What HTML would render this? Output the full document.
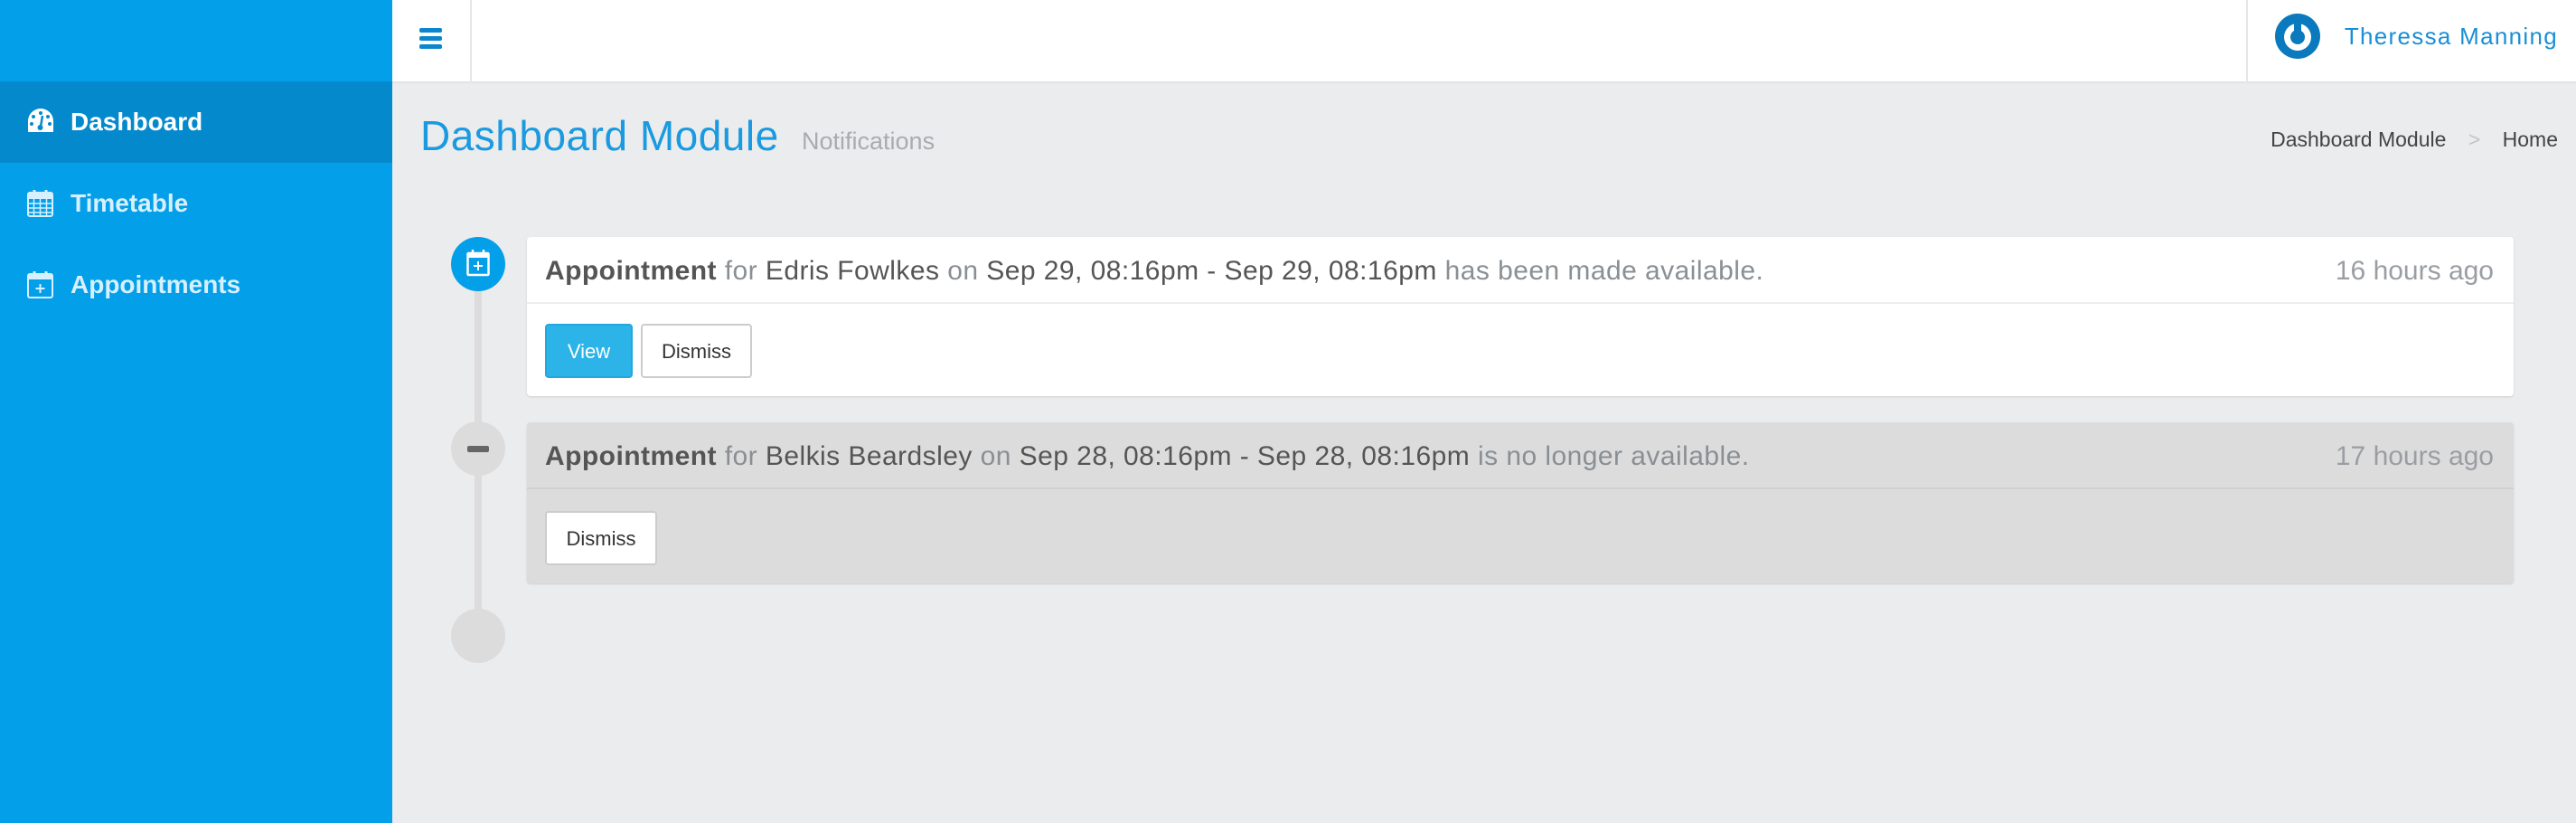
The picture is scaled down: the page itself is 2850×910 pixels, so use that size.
<!DOCTYPE html>
<html><head><meta charset="utf-8"><style>
*{margin:0;padding:0;box-sizing:border-box}
body{width:2850px;height:910px;background:#ebecee;font-family:"Liberation Sans",sans-serif;position:relative;overflow:hidden}
.abs{position:absolute}
#side{left:0;top:0;width:434px;height:910px;background:#039fe9}
.nav{left:0;width:434px;height:90px;color:#d6f0ff;font-weight:bold;font-size:28px;line-height:90px;padding-left:78px}
.nav svg{position:absolute;left:30px;top:29px}
#hdr{left:434px;top:0;width:2416px;height:92px;background:#fff;border-bottom:2px solid #e2e3e5}
.card{left:583px;width:2198px;border-radius:4px;box-shadow:0 1px 2px rgba(0,0,0,.12)}
.ch{height:74px;line-height:76px;padding-left:20px;font-size:30px;letter-spacing:0.45px;color:#8a8f94;border-bottom:2px solid #ededed;white-space:nowrap}
.ch b{color:#555}.ch span{color:#555}
.ch i{font-style:normal;position:absolute;right:22px;top:0;color:#9a9ea2;letter-spacing:0}
.btn{position:absolute;height:60px;line-height:58px;text-align:center;font-size:22px;border-radius:4px;border:2px solid #ccc;background:#fff;color:#333}
.dot{width:60px;height:60px;border-radius:50%;left:499px;background:#dcdcdc}
</style></head><body>
<div id="side" class="abs"></div>
<div class="abs" style="left:0;top:90px;width:434px;height:90px;background:#0589cd"></div>
<div class="abs nav" style="top:90px;color:#fff"><svg width="30" height="28" viewBox="0 0 30 28"><path d="M15 1A14 14 0 0 0 1 15v12h28V15A14 14 0 0 0 15 1z" fill="#fff"/><circle cx="15" cy="6" r="2" fill="#0589cd"/><circle cx="7" cy="10" r="2" fill="#0589cd"/><circle cx="23" cy="10" r="2" fill="#0589cd"/><circle cx="5" cy="18" r="2" fill="#0589cd"/><circle cx="25" cy="18" r="2" fill="#0589cd"/><path d="M17 9l-2 12" stroke="#0589cd" stroke-width="2.5"/><circle cx="14.5" cy="22" r="3" fill="#0589cd"/></svg>Dashboard</div>
<div class="abs nav" style="top:180px"><svg width="30" height="32" viewBox="0 0 30 32"><rect x="1" y="4" width="27" height="26" rx="2" fill="none" stroke="#d6f0ff" stroke-width="2"/><rect x="1" y="5" width="27" height="6" fill="#d6f0ff"/><path d="M8 1v6M21 1v6" stroke="#d6f0ff" stroke-width="3"/><path d="M1 16h27M1 21h27M1 26h27M7.5 11v19M14.5 11v19M21.5 11v19" stroke="#d6f0ff" stroke-width="1.5"/></svg>Timetable</div>
<div class="abs nav" style="top:270px"><svg width="30" height="32" viewBox="0 0 30 32"><rect x="1" y="4" width="27" height="26" rx="2" fill="none" stroke="#d6f0ff" stroke-width="2"/><rect x="1" y="5" width="27" height="5" fill="#d6f0ff"/><path d="M8 1v6M21 1v6" stroke="#d6f0ff" stroke-width="3"/><path d="M14.5 15v10M9.5 20h10" stroke="#d6f0ff" stroke-width="2"/></svg>Appointments</div>
<div id="hdr" class="abs"></div>
<div class="abs" style="left:520px;top:0;width:2px;height:92px;background:#e6e6e6"></div>
<div class="abs" style="left:2485px;top:0;width:2px;height:92px;background:#e6e6e6"></div>
<div class="abs" style="left:464px;top:31px;width:25px;height:5px;background:#0b86cc;border-radius:2px;box-shadow:0 9px 0 #0b86cc,0 18px 0 #0b86cc"></div>
<svg class="abs" style="left:2517px;top:15px" width="50" height="50" viewBox="0 0 50 50"><circle cx="25" cy="25" r="25" fill="#0a79bd"/><circle cx="25" cy="26" r="15" fill="#fff"/><circle cx="25" cy="26" r="8" fill="#0a79bd"/><rect x="21" y="8" width="8" height="18" rx="4" fill="#0a79bd"/></svg>
<div class="abs" style="right:20px;top:22px;font-size:26px;letter-spacing:1.3px;color:#1a8fd4;line-height:36px">Theressa Manning</div>
<div class="abs" style="left:465px;top:122px;font-size:46px;letter-spacing:0.5px;color:#1a9ae0;line-height:56px">Dashboard Module</div>
<div class="abs" style="left:887px;top:139px;font-size:27px;color:#a8acb0;line-height:34px">Notifications</div>
<div class="abs" style="right:20px;top:138px;font-size:23px;color:#444;line-height:32px">Dashboard Module <span style="color:#c4c4c4;padding:0 18px">&gt;</span> Home</div>
<div class="abs" style="left:525px;top:300px;width:8px;height:400px;background:#dcdcdc"></div>
<div class="abs dot" style="top:262px;background:#039fe9"><svg style="position:absolute;left:17px;top:13px" width="26" height="32" viewBox="0 0 26 32"><rect x="1.5" y="5" width="23" height="24" rx="1" fill="none" stroke="#fff" stroke-width="2.5"/><rect x="1.5" y="5" width="23" height="5" fill="#fff"/><path d="M7 1v6M19 1v6" stroke="#fff" stroke-width="2.5"/><path d="M13 14v10M8 19h10" stroke="#fff" stroke-width="2"/></svg></div>
<div class="abs dot" style="top:466px"><div style="position:absolute;left:18px;top:27px;width:24px;height:7px;border-radius:2px;background:#666"></div></div>
<div class="abs dot" style="top:673px"></div>
<div class="abs card" style="top:262px;height:176px;background:#fff">
<div class="ch" style="position:relative"><b>Appointment</b> for <span>Edris Fowlkes</span> on <span>Sep 29, 08:16pm - Sep 29, 08:16pm</span> has been made available.<i>16 hours ago</i></div>
<div class="btn" style="left:20px;top:96px;width:97px;background:#2cb3e8;border-color:#22a8df;color:#fff">View</div>
<div class="btn" style="left:126px;top:96px;width:123px">Dismiss</div>
</div>
<div class="abs card" style="top:467px;height:178px;background:#dcdcdc">
<div class="ch" style="position:relative;border-bottom-color:#d0d0d0"><b>Appointment</b> for <span>Belkis Beardsley</span> on <span>Sep 28, 08:16pm - Sep 28, 08:16pm</span> is no longer available.<i>17 hours ago</i></div>
<div class="btn" style="left:20px;top:98px;width:124px">Dismiss</div>
</div>
</body></html>
